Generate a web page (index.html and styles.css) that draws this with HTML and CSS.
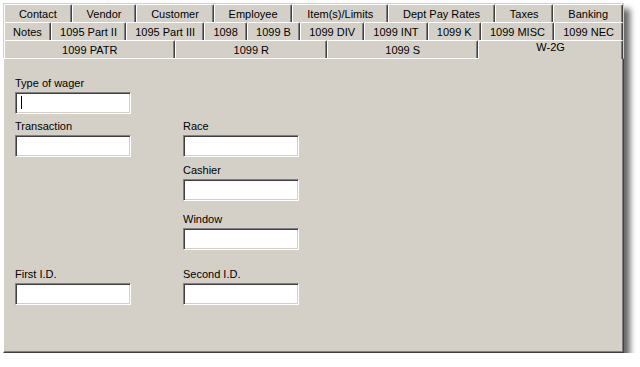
FILE: index.html
```html
<!DOCTYPE html>
<html lang="en">
<head>
    <meta charset="UTF-8">
    <title>W-2G</title>
    <link rel="stylesheet" href="styles.css">
</head>
<body>
    <div class="frame">
        <div class="tabs">
            <div class="tab-row">
                <div class="tab">Contact</div>
                <div class="tab">Vendor</div>
                <div class="tab">Customer</div>
                <div class="tab">Employee</div>
                <div class="tab">Item(s)/Limits</div>
                <div class="tab">Dept Pay Rates</div>
                <div class="tab">Taxes</div>
                <div class="tab">Banking</div>
            </div>
            <div class="tab-row">
                <div class="tab">Notes</div>
                <div class="tab">1095 Part II</div>
                <div class="tab">1095 Part III</div>
                <div class="tab">1098</div>
                <div class="tab">1099 B</div>
                <div class="tab">1099 DIV</div>
                <div class="tab">1099 INT</div>
                <div class="tab">1099 K</div>
                <div class="tab">1099 MISC</div>
                <div class="tab">1099 NEC</div>
            </div>
            <div class="tab-row">
                <div class="tab">1099 PATR</div>
                <div class="tab">1099 R</div>
                <div class="tab">1099 S</div>
                <div class="tab active">W-2G</div>
            </div>
        </div>
        <div class="page">
            <div class="form">
                <div class="field wager">
                    <label>Type of wager</label>
                    <div class="textbox"><span class="caret"></span></div>
                </div>
                <div class="field transaction">
                    <label>Transaction</label>
                    <div class="textbox"></div>
                </div>
                <div class="field race">
                    <label>Race</label>
                    <div class="textbox"></div>
                </div>
                <div class="field cashier">
                    <label>Cashier</label>
                    <div class="textbox"></div>
                </div>
                <div class="field window">
                    <label>Window</label>
                    <div class="textbox"></div>
                </div>
                <div class="field first-id">
                    <label>First I.D.</label>
                    <div class="textbox"></div>
                </div>
                <div class="field second-id">
                    <label>Second I.D.</label>
                    <div class="textbox"></div>
                </div>
            </div>
        </div>
    </div>
</body>
</html>
```

FILE: styles.css
```css
body {
    margin: 0;
    background: #ffffff;
    font-family: 'Liberation Sans', Arial, sans-serif;
    font-size: 11px;
    color: #000000;
}

.frame {
    margin: 3px 0 0 3px;
    width: 621px;
    height: 350px;
    box-sizing: border-box;
    display: flex;
    flex-direction: column;
    background: #d4d0c8;
    box-shadow: 6px 6px 6px rgba(0, 0, 0, 0.6);
}

.tabs {
    padding: 1px 1px 0 1px;
}

.tab-row {
    display: flex;
    height: 18px;
}

.tab {
    flex: 1 1 auto;
    box-sizing: border-box;
    height: 18px;
    border-top: 1px solid #ffffff;
    border-left: 1px solid #ffffff;
    border-right: 1px solid #404040;
    border-radius: 2px 2px 0 0;
    box-shadow: inset -1px 0 #808080;
    text-align: center;
    line-height: 18px;
    white-space: nowrap;
}

.tab.active {
    position: relative;
    z-index: 1;
    height: 19px;
    margin-bottom: -1px;
    line-height: 13px;
    background: #d4d0c8;
}

.page {
    flex: 1;
    border-top: 1px solid #ffffff;
    border-left: 1px solid #ffffff;
    border-right: 1px solid #404040;
    border-bottom: 1px solid #404040;
    box-shadow: inset -1px -1px #808080;
    padding: 18px 0 0 11px;
}

.form {
    display: grid;
    grid-template-columns: 116px 116px;
    grid-template-rows: 43px 44px 49px 55px auto;
    column-gap: 52px;
}

.field {
    display: flex;
    flex-direction: column;
}

.field label {
    line-height: 13px;
    margin-bottom: 2px;
}

.wager { grid-column: 1; grid-row: 1; }
.transaction { grid-column: 1; grid-row: 2; }
.race { grid-column: 2; grid-row: 2; }
.cashier { grid-column: 2; grid-row: 3; }
.window { grid-column: 2; grid-row: 4; }
.first-id { grid-column: 1; grid-row: 5; }
.second-id { grid-column: 2; grid-row: 5; }

.textbox {
    box-sizing: border-box;
    height: 22px;
    background: #ffffff;
    border-top: 1px solid #808080;
    border-left: 1px solid #808080;
    border-right: 1px solid #ffffff;
    border-bottom: 1px solid #ffffff;
    box-shadow: inset 1px 1px #404040, inset -1px -1px #d4d0c8;
    padding: 3px 0 0 5px;
}

.caret {
    display: block;
    width: 1px;
    height: 13px;
    background: #000000;
}
```
